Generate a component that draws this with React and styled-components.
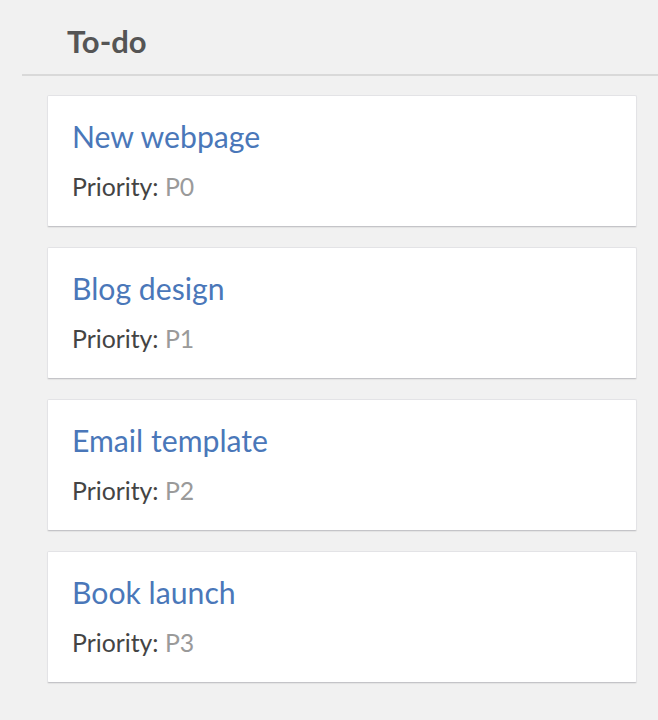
import React from 'react';
import styled, { createGlobalStyle } from 'styled-components';

const tasks = [
  { id: 1, title: 'New webpage', priority: 'P0' },
  { id: 2, title: 'Blog design', priority: 'P1' },
  { id: 3, title: 'Email template', priority: 'P2' },
  { id: 4, title: 'Book launch', priority: 'P3' },
];

const GlobalStyle = createGlobalStyle`
  body {
    margin: 0;
    background: #f1f1f1;
    font-family: Lato, "Noto Sans", sans-serif;
  }
`;

const Column = styled.section`
  margin-left: 22px;
  min-height: 720px;
`;

const ColumnHeader = styled.h2`
  margin: 0;
  padding: 23px 0 15px 45px;
  font-size: 31px;
  line-height: 36px;
  font-weight: 700;
  color: #555555;
  border-bottom: 2px solid #d9d9d9;
`;

const CardList = styled.ul`
  list-style: none;
  margin: 0;
  padding: 19px 21px 0 25px;
  display: flex;
  flex-direction: column;
  gap: 20px;
`;

const Card = styled.li`
  background: #ffffff;
  border: 1px solid #e3e3e6;
  border-bottom-color: #c4c4c8;
  border-radius: 2px;
  box-shadow: 0 1px 1px rgba(0, 0, 0, 0.06);
  padding: 23px 24px 0;
  height: 132px;
  box-sizing: border-box;
`;

const CardTitle = styled.div`
  font-size: 30.2px;
  line-height: 34px;
  color: #4a77b9;
`;

const PriorityLine = styled.div`
  margin-top: 20px;
  font-size: 24.8px;
  line-height: 28px;
  color: #444444;
`;

const PriorityValue = styled.span`
  color: #9a9a9a;
`;

export default function App() {
  return (
    <>
      <GlobalStyle />
      <Column>
        <ColumnHeader>To-do</ColumnHeader>
        <CardList>
          {tasks.map((task) => (
            <Card key={task.id}>
              <CardTitle>{task.title}</CardTitle>
              <PriorityLine>
                Priority: <PriorityValue>{task.priority}</PriorityValue>
              </PriorityLine>
            </Card>
          ))}
        </CardList>
      </Column>
    </>
  );
}
